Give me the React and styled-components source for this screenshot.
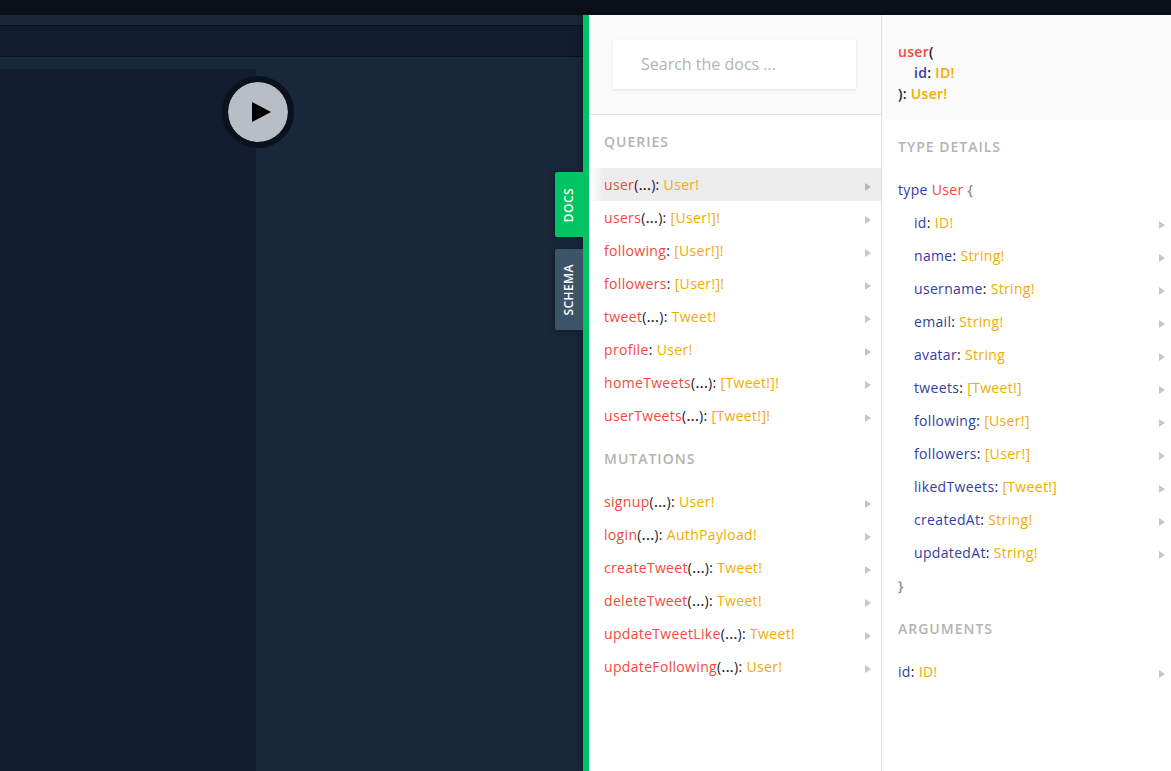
import React from 'react';
import styled, { createGlobalStyle } from 'styled-components';

const GlobalStyle = createGlobalStyle`
  * { box-sizing: border-box; }
  body {
    margin: 0;
    overflow: hidden;
    background: #19273a;
    font-family: 'Open Sans', sans-serif;
    font-size: 14px;
    line-height: 21px;
    letter-spacing: 0.33px;
  }
`;

const Page = styled.div`
  display: flex;
  flex-direction: column;
  height: 100vh;
`;

const TabStrip = styled.div`
  flex: 0 0 15px;
  background: #0a111b;
`;

const Workspace = styled.div`
  flex: 1;
  display: flex;
  min-height: 0;
`;

const Session = styled.main`
  flex: 1;
  min-width: 0;
  display: flex;
  flex-direction: column;
  padding-top: 10px;
  background: #19273a;
`;

const UrlBar = styled.div`
  height: 32px;
  background: #111c2e;
  border: solid #0a111b;
  border-width: 1px 0;
`;

const Editors = styled.div`
  flex: 1;
  display: flex;
  margin-top: 12px;
`;

const QueryPane = styled.section`
  position: relative;
  width: 256px;
  background: #111c2e;
`;

const ExecuteButton = styled.button`
  position: absolute;
  top: 7px;
  right: -38px;
  display: flex;
  align-items: center;
  justify-content: center;
  width: 72px;
  height: 72px;
  padding: 0 0 0 6px;
  border: 6px solid #0b121d;
  border-radius: 50%;
  background: #b9bec6;
  background-clip: padding-box;
`;

const Docs = styled.aside`
  position: relative;
  display: flex;
  width: 588px;
  background: #fff;
  border-left: 6px solid #00c364;
  box-shadow: 0 0 8px rgba(0, 0, 0, 0.4);
`;

const SideTabs = styled.nav`
  position: absolute;
  top: 157px;
  left: -34px;
  display: flex;
  flex-direction: column;
  gap: 12px;
`;

const SideTab = styled.div`
  display: flex;
  align-items: center;
  justify-content: center;
  width: 28px;
  height: ${(p) => p.$height}px;
  padding: 1px 2px 0 0;
  border-radius: 2px 0 0 2px;
  background: ${(p) => (p.$active ? '#00c364' : '#3d5368')};
  box-shadow: -1px 1px 6px rgba(0, 0, 0, 0.3);
  clip-path: inset(-8px 0 -8px -8px);
  color: #fff;
  font-size: 12px;
  font-weight: 600;
  line-height: 17px;
  letter-spacing: 0.45px;

  span {
    writing-mode: vertical-rl;
    transform: rotate(180deg);
  }
`;

const Column = styled.section`
  width: ${(p) => p.$width}px;
  border-right: ${(p) => (p.$divider ? '1px solid #e0e0e0' : '0')};
`;

const SearchHeader = styled.header`
  height: 100px;
  padding: 25px 25px 25px 24px;
  background: #fafafa;
  border-bottom: 1px solid #e0e0e0;
`;

const SearchInput = styled.input`
  display: block;
  width: 100%;
  height: 49px;
  padding: 0 28px 2px;
  border: 0;
  border-radius: 1px;
  background: #fff;
  box-shadow: 0 1px 3px rgba(0, 0, 0, 0.1);
  font: 16px 'Open Sans', sans-serif;

  &::placeholder { color: #b3b3b3; opacity: 1; }
`;

const Signature = styled.header`
  height: 105px;
  padding: 26px 16px 16px;
  background: #fafafa;
  font-weight: 600;
  letter-spacing: 0.3px;
  color: #17172b;
`;

const SignatureArg = styled.div`
  padding-left: 16px;
`;

const Heading = styled.h2`
  margin: 0;
  padding: 16px ${(p) => p.$inset}px;
  color: #b3b3b3;
  font-size: 14px;
  line-height: 21px;
  font-weight: 600;
  letter-spacing: 1px;
`;

const Row = styled.div`
  display: flex;
  align-items: center;
  justify-content: space-between;
  height: 33px;
  padding: 0 ${(p) => p.$end ?? 6}px 0 ${(p) => p.$inset}px;
  color: #17172b;
  background: ${(p) => (p.$selected ? 'linear-gradient(to right, #fff, #ececec 15px)' : 'none')};
  white-space: nowrap;
`;

const Field = styled.span`color: #f5483d;`;
const Arg = styled.span`color: #3340a3;`;
const Type = styled.span`color: #f2ab00;`;
const Dots = styled.span`font-weight: 600;`;
const Brace = styled.span`
  color: #8b8b98;
  font-weight: 600;
`;

const Marker = styled.span`
  width: 0;
  height: 0;
  margin-top: 4px;
  border-style: solid;
  border-width: 3.5px 0 3.5px 6px;
  border-width: 4px 0 4px 6px;
  border-color: transparent transparent transparent ${(p) => (p.$strong ? '#b5b5b5' : '#c6c6c6')};
`;

const queries = [
  ['user', true, 'User!'],
  ['users', true, '[User!]!'],
  ['following', false, '[User!]!'],
  ['followers', false, '[User!]!'],
  ['tweet', true, 'Tweet!'],
  ['profile', false, 'User!'],
  ['homeTweets', true, '[Tweet!]!'],
  ['userTweets', true, '[Tweet!]!'],
];

const mutations = [
  ['signup', true, 'User!'],
  ['login', true, 'AuthPayload!'],
  ['createTweet', true, 'Tweet!'],
  ['deleteTweet', true, 'Tweet!'],
  ['updateTweetLike', true, 'Tweet!'],
  ['updateFollowing', true, 'User!'],
];

const userFields = [
  ['id', 'ID!'],
  ['name', 'String!'],
  ['username', 'String!'],
  ['email', 'String!'],
  ['avatar', 'String'],
  ['tweets', '[Tweet!]'],
  ['following', '[User!]'],
  ['followers', '[User!]'],
  ['likedTweets', '[Tweet!]'],
  ['createdAt', 'String!'],
  ['updatedAt', 'String!'],
];

function Operations({ title, items, selected }) {
  return (
    <>
      <Heading $inset={15}>{title}</Heading>
      {items.map(([name, hasArgs, type]) => (
        <Row key={name} $inset={15} $end={10} $selected={name === selected}>
          <span>
            <Field>{name}</Field>
            {hasArgs && <>(<Dots>...</Dots>)</>}: <Type>{type}</Type>
          </span>
          <Marker $strong={name === selected} />
        </Row>
      ))}
    </>
  );
}

function ArgRow({ name, type, inset }) {
  return (
    <Row $inset={inset}>
      <span>
        <Arg>{name}</Arg>: <Type>{type}</Type>
      </span>
      <Marker />
    </Row>
  );
}

export default function App() {
  return (
    <Page>
      <GlobalStyle />
      <TabStrip />
      <Workspace>
        <Session>
          <UrlBar />
          <Editors>
            <QueryPane>
              <ExecuteButton aria-label="Execute query">
                <svg width="19" height="20" viewBox="0 0 19 20">
                  <path d="M0 0 L19 10 L0 20 Z" fill="#000" />
                </svg>
              </ExecuteButton>
            </QueryPane>
          </Editors>
        </Session>
        <Docs>
          <SideTabs>
            <SideTab $active $height={65}><span>DOCS</span></SideTab>
            <SideTab $height={81}><span>SCHEMA</span></SideTab>
          </SideTabs>
          <Column $width={293} $divider>
            <SearchHeader>
              <SearchInput placeholder="Search the docs ..." />
            </SearchHeader>
            <Operations title="QUERIES" items={queries} selected="user" />
            <Operations title="MUTATIONS" items={mutations} />
          </Column>
          <Column $width={289}>
            <Signature>
              <div><Field>user</Field>(</div>
              <SignatureArg><Arg>id</Arg>: <Type>ID!</Type></SignatureArg>
              <div>): <Type>User!</Type></div>
            </Signature>
            <Heading $inset={16}>TYPE DETAILS</Heading>
            <Row $inset={16}>
              <span><Arg>type</Arg> <Field>User</Field> <Brace>{'{'}</Brace></span>
            </Row>
            {userFields.map(([name, type]) => (
              <ArgRow key={name} name={name} type={type} inset={32} />
            ))}
            <Row $inset={16}><Brace>{'}'}</Brace></Row>
            <Heading $inset={16}>ARGUMENTS</Heading>
            <ArgRow name="id" type="ID!" inset={16} />
          </Column>
        </Docs>
      </Workspace>
    </Page>
  );
}
